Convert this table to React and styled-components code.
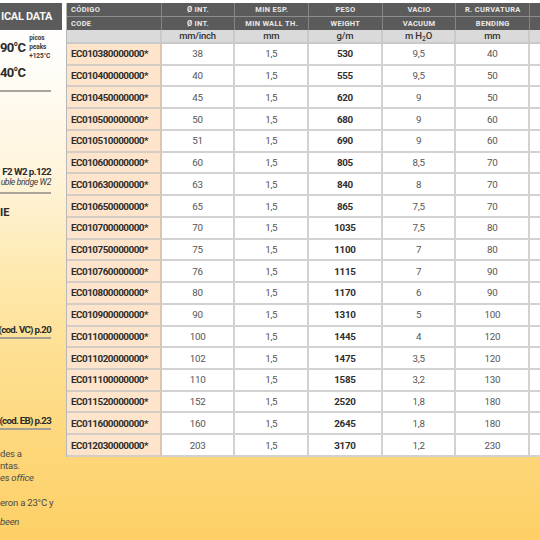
import React from "react";
import styled, { createGlobalStyle } from "styled-components";

const FONT = `"Roboto", "Liberation Sans", sans-serif`;

const Global = createGlobalStyle`
  html, body { margin: 0; padding: 0; width: 540px; height: 540px; overflow: hidden; }
  body {
    font-family: ${FONT};
    background: linear-gradient(180deg, #ffffff 0%, #fffdf8 12%, #fff4da 33%, #fee8ac 52%, #fede8e 68%, #fdd677 85%, #fdd066 100%);
  }
`;

const Page = styled.div`
  display: flex;
  align-items: flex-start;
  gap: 4px;
  padding-top: 3px;
  width: 540px;
  height: 540px;
  box-sizing: border-box;
  overflow: hidden;
`;

/* ---------- left panel ---------- */
const Side = styled.aside`
  flex: none;
  width: 62px;
  display: flex;
  flex-direction: column;
  overflow: hidden;
  white-space: nowrap;
  color: #2b2b2b;
`;

const SideHeader = styled.div`
  height: 27px;
  background: #5b5b5b;
  color: #f4f4f4;
  font-weight: 700;
  font-size: 11px;
  letter-spacing: -0.3px;
  display: flex;
  align-items: center;
  padding-left: 1px;
`;

const TempRow = styled.div`
  margin-top: ${(p) => p.$mt || 0}px;
  display: flex;
  align-items: center;
  gap: 4px;
`;

const BigTemp = styled.span`
  font-weight: 700;
  font-size: 13px;
  line-height: 16px;
  letter-spacing: -0.8px;
`;

const Peaks = styled.div`
  display: flex;
  flex-direction: column;
  font-weight: 700;
  font-size: 6.5px;
  line-height: 9px;
  letter-spacing: -0.1px;
  color: #3a3a3a;
`;

const Rule = styled.div`
  margin-top: ${(p) => p.$mt || 0}px;
  width: 51px;
  height: 2px;
  background: #aaa49b;
`;

const RightLine = styled.div`
  margin-top: ${(p) => p.$mt || 0}px;
  width: 51px;
  display: flex;
  justify-content: flex-end;
  font-size: ${(p) => (p.$italic ? 8.7 : 9.8)}px;
  line-height: 10px;
  letter-spacing: ${(p) => (p.$italic ? "-0.4px" : "-0.6px")};
  font-weight: ${(p) => (p.$italic ? 400 : 700)};
  font-style: ${(p) => (p.$italic ? "italic" : "normal")};
  color: ${(p) => (p.$italic ? "#3d3d3d" : "#2b2b2b")};
`;

const Heading = styled.div`
  margin-top: ${(p) => p.$mt || 0}px;
  font-weight: 700;
  font-size: 11px;
  line-height: 14px;
`;

const RefLink = styled.div`
  margin-top: ${(p) => p.$mt || 0}px;
  width: 51px;
  display: flex;
  justify-content: flex-end;
  font-weight: 700;
  font-size: 9.7px;
  letter-spacing: -0.7px;
  line-height: 12px;
  padding-bottom: 1px;
  border-bottom: 2px solid #a79f93;
`;

const Note = styled.p`
  margin: ${(p) => p.$mt || 0}px 0 0;
  font-size: 9.5px;
  line-height: 12px;
  letter-spacing: -0.2px;
  color: #4a4a4a;
`;

const NoteEm = styled.em`
  font-style: italic;
`;

/* ---------- table ---------- */
const Table = styled.div`
  flex: none;
  display: grid;
  grid-template-columns: 94.7px repeat(6, 73.7px);
  grid-template-rows: 13.5px 13.5px 14px repeat(19, 21.74px);
  border-left: 1px solid #b8b8b8;
`;

const HeadCell = styled.div`
  box-sizing: border-box;
  background: #5b5b5b;
  color: #e9e9e9;
  font-weight: 700;
  font-size: 7.5px;
  letter-spacing: 0.3px;
  display: flex;
  align-items: center;
  justify-content: ${(p) => (p.$left ? "flex-start" : "center")};
  padding-left: ${(p) => (p.$left ? "4px" : "0")};
  border-right: 1.5px solid #858585;
  border-bottom: ${(p) => (p.$top ? "1px solid #8d8d8d" : "none")};
`;

const UnitCell = styled.div`
  box-sizing: border-box;
  background: #dadada;
  color: #333;
  font-weight: 500;
  font-size: 9.5px;
  letter-spacing: -0.2px;
  display: flex;
  align-items: center;
  justify-content: center;
  border-right: 2px solid #c9c9c9;
  border-bottom: 2px solid #c9c9c9;
`;

const UnitText = styled.span`
  line-height: 12px;
`;

const Sub = styled.sub`
  font-size: 6.5px;
  vertical-align: -2px;
  line-height: 0;
  margin: 0 0.3px;
`;

const CodeCell = styled.div`
  box-sizing: border-box;
  background: #fde4ca;
  color: #2e2e2e;
  font-weight: 700;
  font-size: 9.9px;
  letter-spacing: -0.5px;
  display: flex;
  align-items: center;
  padding-left: 4px;
  border-right: 2px solid #dcc6b0;
  border-bottom: 2px solid #d4cdc5;
`;

const ValueCell = styled.div`
  box-sizing: border-box;
  background: #ffffff;
  color: ${(p) => (p.$bold ? "#2e2e2e" : "#555")};
  font-weight: ${(p) => (p.$bold ? 700 : 400)};
  font-size: 9.8px;
  letter-spacing: -0.3px;
  display: flex;
  align-items: center;
  justify-content: center;
  border-right: 2px solid #d2d2d2;
  border-bottom: 2px solid #d2d2d2;
`;

const rows = [
  ["EC010380000000*", "38", "1,5", "530", "9,5", "40"],
  ["EC010400000000*", "40", "1,5", "555", "9,5", "50"],
  ["EC010450000000*", "45", "1,5", "620", "9", "50"],
  ["EC010500000000*", "50", "1,5", "680", "9", "60"],
  ["EC010510000000*", "51", "1,5", "690", "9", "60"],
  ["EC010600000000*", "60", "1,5", "805", "8,5", "70"],
  ["EC010630000000*", "63", "1,5", "840", "8", "70"],
  ["EC010650000000*", "65", "1,5", "865", "7,5", "70"],
  ["EC010700000000*", "70", "1,5", "1035", "7,5", "80"],
  ["EC010750000000*", "75", "1,5", "1100", "7", "80"],
  ["EC010760000000*", "76", "1,5", "1115", "7", "90"],
  ["EC010800000000*", "80", "1,5", "1170", "6", "90"],
  ["EC010900000000*", "90", "1,5", "1310", "5", "100"],
  ["EC011000000000*", "100", "1,5", "1445", "4", "120"],
  ["EC011020000000*", "102", "1,5", "1475", "3,5", "120"],
  ["EC011100000000*", "110", "1,5", "1585", "3,2", "130"],
  ["EC011520000000*", "152", "1,5", "2520", "1,8", "180"],
  ["EC011600000000*", "160", "1,5", "2645", "1,8", "180"],
  ["EC012030000000*", "203", "1,5", "3170", "1,2", "230"],
];

const head1 = ["CÓDIGO", "Ø INT.", "MIN ESP.", "PESO", "VACIO", "R. CURVATURA", ""];
const head2 = ["CODE", "Ø INT.", "MIN WALL TH.", "WEIGHT", "VACUUM", "BENDING", ""];
const units = [
  "",
  "mm/inch",
  "mm",
  "g/m",
  <>
    m H<Sub>2</Sub>O
  </>,
  "mm",
  "",
];

export default function App() {
  return (
    <>
      <Global />
      <Page>
        <Side>
          <SideHeader>ICAL DATA</SideHeader>
          <TempRow $mt={4}>
            <BigTemp>90°C</BigTemp>
            <Peaks>
              <span>picos</span>
              <span>peaks</span>
              <span>+125°C</span>
            </Peaks>
          </TempRow>
          <TempRow $mt={4}>
            <BigTemp>40°C</BigTemp>
          </TempRow>
          <Rule $mt={9} />
          <RightLine $mt={75}>F2 W2 p.122</RightLine>
          <RightLine $italic>uble bridge W2</RightLine>
          <Rule $mt={5} />
          <Heading $mt={12}>IE</Heading>
          <RefLink $mt={104}>(cod. VC) p.20</RefLink>
          <RefLink $mt={76}>(cod. EB) p.23</RefLink>
          <Note $mt={18}>
            des a
            <br />
            ntas.
            <br />
            <NoteEm>es office</NoteEm>
          </Note>
          <Note $mt={13}>eron a 23°C y</Note>
          <Note $mt={7}>
            <NoteEm>been</NoteEm>
          </Note>
        </Side>
        <Table>
          {head1.map((h, i) => (
            <HeadCell key={"a" + i} $top $left={i === 0}>
              {h}
            </HeadCell>
          ))}
          {head2.map((h, i) => (
            <HeadCell key={"b" + i} $left={i === 0}>
              {h}
            </HeadCell>
          ))}
          {units.map((u, i) => (
            <UnitCell key={"u" + i}>
              <UnitText>{u}</UnitText>
            </UnitCell>
          ))}
          {rows.map((r) => (
            <React.Fragment key={r[0]}>
              <CodeCell>{r[0]}</CodeCell>
              <ValueCell>{r[1]}</ValueCell>
              <ValueCell>{r[2]}</ValueCell>
              <ValueCell $bold>{r[3]}</ValueCell>
              <ValueCell>{r[4]}</ValueCell>
              <ValueCell>{r[5]}</ValueCell>
              <ValueCell />
            </React.Fragment>
          ))}
        </Table>
      </Page>
    </>
  );
}
